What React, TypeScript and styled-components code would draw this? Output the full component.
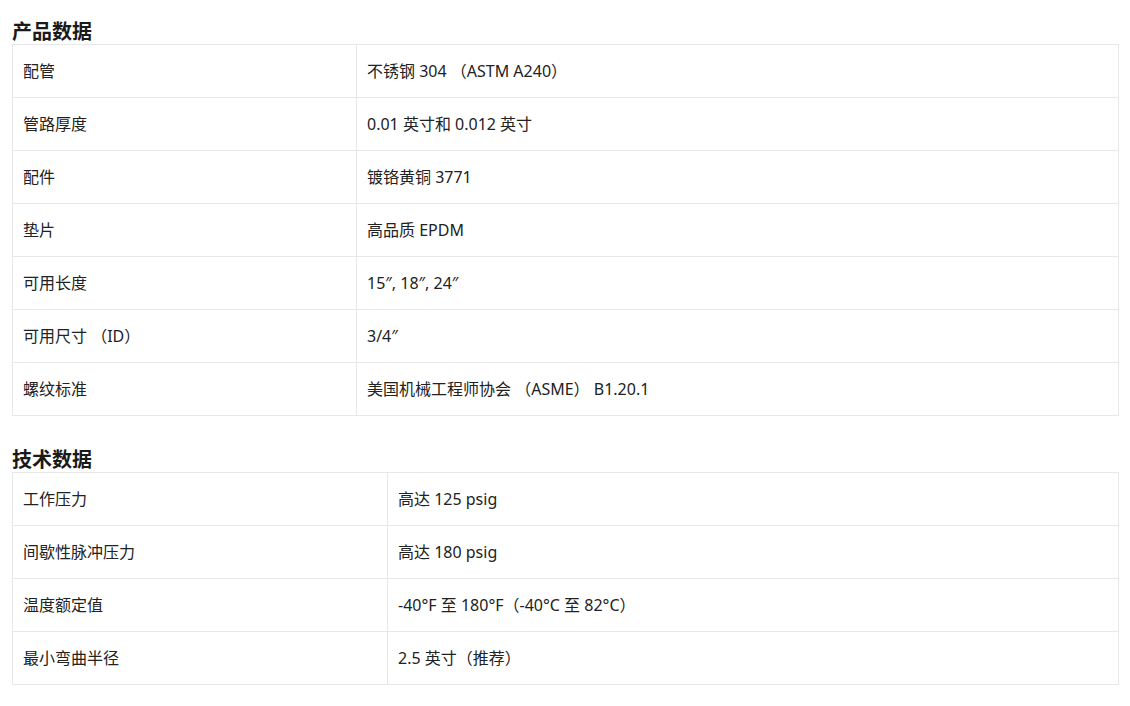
import styled, { createGlobalStyle } from 'styled-components'

const GlobalStyle = createGlobalStyle`
  html, body {
    margin: 0;
    padding: 0;
    background: #fff;
  }
  body {
    font-family: 'Noto Sans', 'Noto Sans CJK SC', sans-serif;
    color: #222;
  }
`

const Page = styled.div`
  padding: 20px 11px 20px 12px;
  display: flex;
  flex-direction: column;
  gap: 32px;
`

const Section = styled.section`
  display: flex;
  flex-direction: column;
`

const Title = styled.h2`
  margin: 0;
  font-size: 20px;
  line-height: 24px;
  font-weight: 700;
  color: #1a1a1a;
`

const Table = styled.table`
  width: 100%;
  border-collapse: collapse;
  table-layout: fixed;
  font-size: 16px;
`

const Cell = styled.td<{ $width?: number }>`
  height: 52px;
  padding: 0 10px;
  border: 1px solid #e8e8e8;
  vertical-align: middle;
  line-height: 20px;
  color: #222;
  ${({ $width }) => ($width ? `width: ${$width}px;` : '')}
`

interface SpecTableProps {
  title: string
  labelWidth: number
  rows: [string, string][]
}

function SpecTable({ title, labelWidth, rows }: SpecTableProps) {
  return (
    <Section>
      <Title>{title}</Title>
      <Table>
        <tbody>
          {rows.map(([label, value]) => (
            <tr key={label}>
              <Cell $width={labelWidth}>{label}</Cell>
              <Cell>{value}</Cell>
            </tr>
          ))}
        </tbody>
      </Table>
    </Section>
  )
}

const productRows: [string, string][] = [
  ['配管', '不锈钢 304 （ASTM A240）'],
  ['管路厚度', '0.01 英寸和 0.012 英寸'],
  ['配件', '镀铬黄铜 3771'],
  ['垫片', '高品质 EPDM'],
  ['可用长度', '15″, 18″, 24″'],
  ['可用尺寸 （ID）', '3/4″'],
  ['螺纹标准', '美国机械工程师协会 （ASME） B1.20.1'],
]

const techRows: [string, string][] = [
  ['工作压力', '高达 125 psig'],
  ['间歇性脉冲压力', '高达 180 psig'],
  ['温度额定值', '-40°F 至 180°F（-40°C 至 82°C）'],
  ['最小弯曲半径', '2.5 英寸（推荐）'],
]

export default function App() {
  return (
    <>
      <GlobalStyle />
      <Page>
        <SpecTable title="产品数据" labelWidth={323} rows={productRows} />
        <SpecTable title="技术数据" labelWidth={354} rows={techRows} />
      </Page>
    </>
  )
}
